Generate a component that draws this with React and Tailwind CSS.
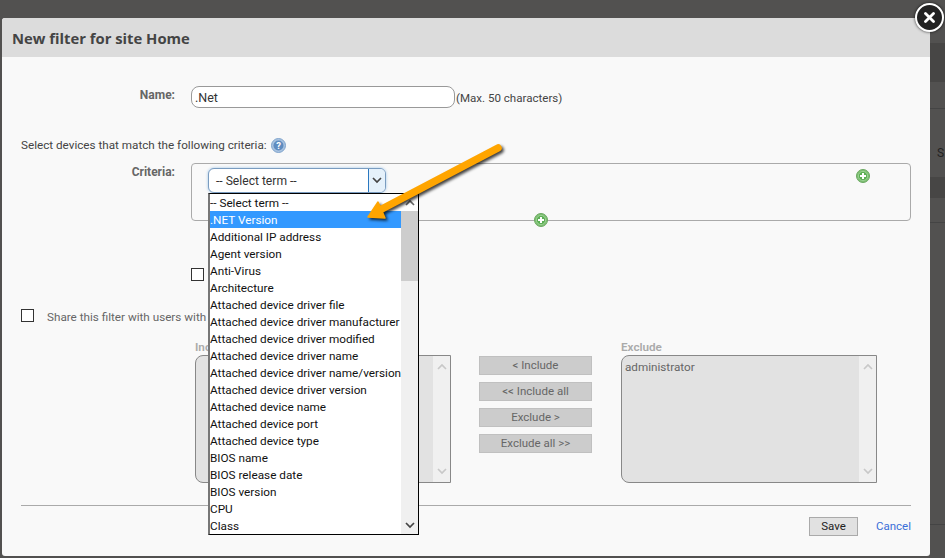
const FONT = "font-['Roboto','Noto_Sans',sans-serif]";

const OPTIONS = [
  "-- Select term --", ".NET Version", "Additional IP address", "Agent version", "Anti-Virus", "Architecture",
  "Attached device driver file", "Attached device driver manufacturer", "Attached device driver modified",
  "Attached device driver name", "Attached device driver name/version", "Attached device driver version",
  "Attached device name", "Attached device port", "Attached device type", "BIOS name", "BIOS release date",
  "BIOS version", "CPU", "Class",
];

function Chevron({ up, color = "#555", className = "" }) {
  return (
    <svg width="10" height="7" viewBox="0 0 10 7" className={className}>
      <path d={up ? "M1 6 L5 2 L9 6" : "M1 1 L5 5 L9 1"} fill="none" stroke={color} strokeWidth="1.7" />
    </svg>
  );
}

function Plus({ className = "" }) {
  return (
    <svg width="14" height="14" viewBox="0 0 14 14" className={className}>
      <circle cx="7" cy="7" r="6.5" fill="#7fbf74" stroke="#6aa860" strokeWidth="1" />
      <circle cx="7" cy="7" r="4.6" fill="#5cae55" stroke="#a5d89d" strokeWidth="0.8" />
      <path d="M7 4 V10 M4 7 H10" stroke="#fff" strokeWidth="2" />
    </svg>
  );
}

function ListBox({ label, children }) {
  return (
    <div className="w-[256px] flex flex-col">
      <div className="h-[14px] text-[11.7px] leading-[12px] font-semibold text-[#aaa]">{label}</div>
      <div className="h-[128px] flex rounded-l-lg border border-[#888] bg-[#e2e2e2] overflow-hidden">
        <div className="flex-1 px-[3px] py-[2px] text-[11.7px] leading-[18px] text-[#666]">{children}</div>
        <div className="w-[17px] bg-[#f0f0f0] flex flex-col items-center justify-between py-[7px]">
          <Chevron up color="#c8c8c8" />
          <Chevron color="#c8c8c8" />
        </div>
      </div>
    </div>
  );
}

function MoveButton({ children }) {
  return (
    <button className="h-[19px] w-[113px] bg-[#ccc] border border-[#c0c0c0] text-[11.5px] leading-[15px] text-[#666]">
      {children}
    </button>
  );
}

export default function App() {
  return (
    <div className={`${FONT} relative w-[945px] h-[558px] overflow-hidden bg-[#525150] flex pl-[2px] pt-[18px] text-[12px]`}>
      <div className="w-[928px] h-[538px] shrink-0 rounded-[3px] bg-[#f9f9f9] flex flex-col overflow-hidden">
        <div className="h-[39px] shrink-0 bg-[#dcdcdc] pl-[10px] font-['Open_Sans',sans-serif] text-[14.8px] leading-[41px] font-bold text-[#444]">
          New filter for site Home
        </div>
        <div className="flex-1 pl-[19px] pr-[19px] flex flex-col text-[#444]">
          <div className="flex items-start mt-[29px]">
            <div className="w-[154px] text-right font-bold text-[12px] leading-[18px] text-[#666]">Name:</div>
            <input
              readOnly
              value=".Net"
              className="ml-[16px] w-[264px] h-[22px] rounded-lg border border-[#999] bg-white px-[3px] text-[12.5px] text-[#333] outline-none"
            />
            <div className="leading-[24px] text-[11.55px] ml-[1px]">(Max. 50 characters)</div>
          </div>

          <div className="flex items-center mt-[28px] h-[16px] text-[11.7px]">
            Select devices that match the following criteria:
            <svg width="15" height="15" viewBox="0 0 15 15" className="ml-[4px] -translate-y-[1px]">
              <circle cx="7.5" cy="7.5" r="7" fill="#a9c3e0" stroke="#7fa3cc" strokeWidth="1" />
              <circle cx="7.5" cy="7.5" r="5" fill="#5f8cc0" />
              <text x="7.5" y="11" textAnchor="middle" fontSize="9.5" fontWeight="700" fill="#fff">?</text>
            </svg>
          </div>

          <div className="flex items-start mt-[9px]">
            <div className="w-[154px] text-right font-bold text-[12px] leading-[18px] text-[#666]">Criteria:</div>
            <div className="relative ml-[16px] w-[720px] h-[58px] rounded-[4px] border border-[#aaa] pl-[16px] pt-[4px]">
              <div className="w-[178px] h-[25px] flex rounded-md border border-[#7a9cc0] bg-white shadow-[0_0_3px_#9cc3e6] overflow-hidden">
                <div className="flex-1 pl-[7px] text-[12.1px] leading-[25px] text-[#333]">-- Select term --</div>
                <div className="w-[17px] border-l border-[#2a78c0] bg-[#e5f1fb] flex items-center justify-center">
                  <Chevron color="#444" />
                </div>
              </div>
              <Plus className="absolute left-[664px] top-[5px]" />
              <Plus className="absolute left-[342px] top-[49px]" />
            </div>
          </div>

          <div className="ml-[170px] mt-[47px] h-[13px]">
            <input type="checkbox" readOnly className="block appearance-none w-[13px] h-[13px] border border-[#333] bg-white" />
          </div>

          <div className="flex items-center mt-[28px] h-[13px]">
            <input type="checkbox" readOnly className="block appearance-none w-[13px] h-[13px] border border-[#333] bg-white" />
            <span className="ml-[13px] pt-[5px] text-[11.7px] text-[#666] whitespace-nowrap">Share this filter with users with</span>
          </div>

          <div className="flex items-start ml-[174px] mt-[19px]">
            <ListBox label="Include" />
            <div className="ml-[28px] mt-[15px] flex flex-col gap-[7px]">
              <MoveButton>&lt; Include</MoveButton>
              <MoveButton>&lt;&lt; Include all</MoveButton>
              <MoveButton>Exclude &gt;</MoveButton>
              <MoveButton>Exclude all &gt;&gt;</MoveButton>
            </div>
            <div className="ml-[29px]">
              <ListBox label="Exclude">administrator</ListBox>
            </div>
          </div>

          <div className="mt-[22px] border-t border-[#aaa]" />

          <div className="mt-[11px] flex items-center justify-end">
            <button className="w-[49px] h-[19px] bg-[#e1e1e1] border border-[#aaa] text-[11.5px] leading-[15px] text-[#222]">Save</button>
            <a className="ml-[18px] w-[35px] text-[11.5px] text-[#3a6fd8]">Cancel</a>
          </div>
        </div>
      </div>

      <div className="flex-1 flex flex-col text-[#222] text-[12px] overflow-hidden">
        <div className="h-[25px]" />
        <div className="h-[39px] bg-[#474645]" />
        <div className="h-[27px] border-b border-[#444]" />
        <div className="h-[68px] pl-[7px] pt-[38px] leading-none">S</div>
        <div className="h-[21px] bg-[#474645]" />
        <div className="h-[25px] border-b border-[#444]" />
        <div className="h-[302px] border-b border-[#444]" />
      </div>

      {/* open dropdown list */}
      <div className="absolute left-[208px] top-[193px] w-[211px] h-[342px] bg-white border border-black border-l-[#777] border-l-2 flex text-[11.75px] text-[#111]">
        <div className="w-[191px] whitespace-nowrap overflow-hidden">
          {OPTIONS.map((o) => (
            <div
              key={o}
              className={`h-[17px] leading-[18px] ${o === ".NET Version" ? "bg-[#3399ff] text-white" : ""}`}
            >
              {o}
            </div>
          ))}
        </div>
        <div className="flex-1 bg-[#f0f0f0] flex flex-col items-center">
          <div className="h-[17px] w-full bg-white flex items-center justify-center">
            <Chevron up color="#666" />
          </div>
          <div className="h-[70px] w-full bg-[#cdcdcd]" />
          <div className="flex-1" />
          <div className="h-[17px] flex items-center">
            <Chevron color="#444" />
          </div>
        </div>
      </div>

      {/* annotation arrow */}
      <svg width="150" height="85" viewBox="0 0 150 85" className="absolute left-[360px] top-[140px] drop-shadow-[2px_2px_1.5px_rgba(0,0,0,0.75)]">
        <path d="M138 8 L18 71" stroke="#ffa500" strokeWidth="7.5" strokeLinecap="round" fill="none" />
        <path d="M8 77 L18 62 L25 78 Z" fill="#ffa500" stroke="#ffa500" strokeWidth="1.5" strokeLinejoin="round" />
      </svg>

      {/* close button */}
      <div className="absolute left-[915px] top-[3px] w-[29px] h-[29px] rounded-full bg-[#222] border-2 border-white shadow-[0_0_3px_rgba(0,0,0,0.8)] flex items-center justify-center">
        <svg width="11" height="11" viewBox="0 0 11 11">
          <path d="M1.5 1.5 L9.5 9.5 M9.5 1.5 L1.5 9.5" stroke="#fff" strokeWidth="2.8" strokeLinecap="round" />
        </svg>
      </div>
    </div>
  );
}
